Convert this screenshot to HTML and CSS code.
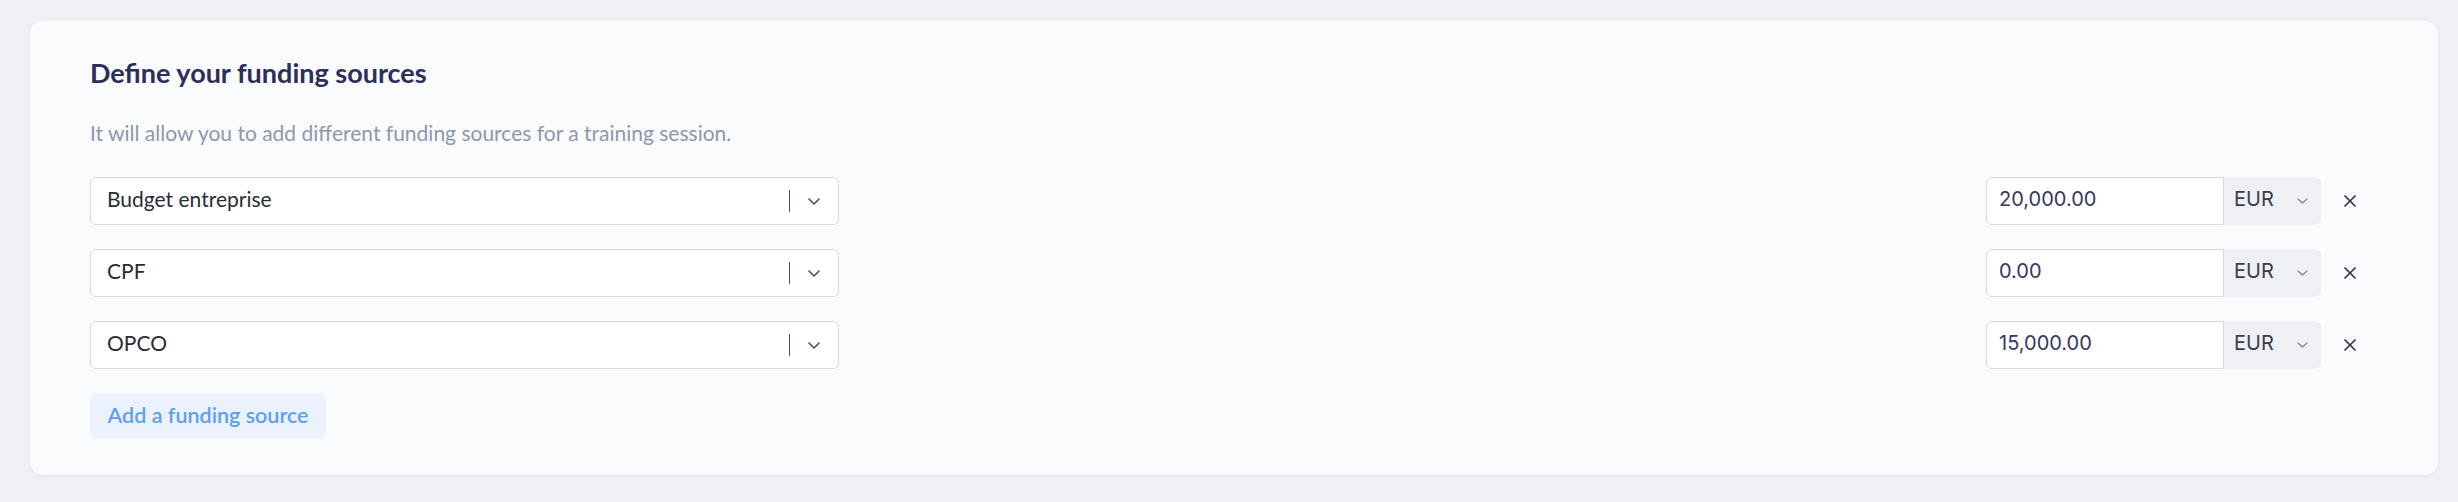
FILE: index.html
```html
<!DOCTYPE html>
<html lang="en">
<head>
<meta charset="utf-8">
<title>Funding sources</title>
<link rel="stylesheet" href="styles.css">
</head>
<body>
<section class="card">
  <h2 class="title">Define your funding sources</h2>
  <p class="subtitle">It will allow you to add different funding sources for a training session.</p>

  <div class="rows">
    <div class="row">
      <div class="select">
        <span class="select-value">Budget entreprise</span>
        <span class="select-sep"></span>
        <svg class="select-chevron" width="12" height="7" viewBox="0 0 12 7"><polyline points="1,1 6,6 11,1" fill="none" stroke="#4b4d70" stroke-width="1.6" stroke-linecap="round" stroke-linejoin="round"/></svg>
      </div>
      <div class="amount">
        <div class="amount-input">20,000.00</div>
        <div class="currency">
          <span>EUR</span>
          <svg class="currency-chevron" width="11" height="6" viewBox="0 0 11 6"><polyline points="1,1 5.5,5 10,1" fill="none" stroke="#7c829c" stroke-width="1.3" stroke-linecap="round" stroke-linejoin="round"/></svg>
        </div>
      </div>
      <button class="remove" type="button" aria-label="Remove">
        <svg width="12" height="12" viewBox="0 0 12 12"><path d="M1 1 L11 11 M11 1 L1 11" stroke="#2e3058" stroke-width="1.7" stroke-linecap="round"/></svg>
      </button>
    </div>

    <div class="row">
      <div class="select">
        <span class="select-value">CPF</span>
        <span class="select-sep"></span>
        <svg class="select-chevron" width="12" height="7" viewBox="0 0 12 7"><polyline points="1,1 6,6 11,1" fill="none" stroke="#4b4d70" stroke-width="1.6" stroke-linecap="round" stroke-linejoin="round"/></svg>
      </div>
      <div class="amount">
        <div class="amount-input">0.00</div>
        <div class="currency">
          <span>EUR</span>
          <svg class="currency-chevron" width="11" height="6" viewBox="0 0 11 6"><polyline points="1,1 5.5,5 10,1" fill="none" stroke="#7c829c" stroke-width="1.3" stroke-linecap="round" stroke-linejoin="round"/></svg>
        </div>
      </div>
      <button class="remove" type="button" aria-label="Remove">
        <svg width="12" height="12" viewBox="0 0 12 12"><path d="M1 1 L11 11 M11 1 L1 11" stroke="#2e3058" stroke-width="1.7" stroke-linecap="round"/></svg>
      </button>
    </div>

    <div class="row">
      <div class="select">
        <span class="select-value">OPCO</span>
        <span class="select-sep"></span>
        <svg class="select-chevron" width="12" height="7" viewBox="0 0 12 7"><polyline points="1,1 6,6 11,1" fill="none" stroke="#4b4d70" stroke-width="1.6" stroke-linecap="round" stroke-linejoin="round"/></svg>
      </div>
      <div class="amount">
        <div class="amount-input">15,000.00</div>
        <div class="currency">
          <span>EUR</span>
          <svg class="currency-chevron" width="11" height="6" viewBox="0 0 11 6"><polyline points="1,1 5.5,5 10,1" fill="none" stroke="#7c829c" stroke-width="1.3" stroke-linecap="round" stroke-linejoin="round"/></svg>
        </div>
      </div>
      <button class="remove" type="button" aria-label="Remove">
        <svg width="12" height="12" viewBox="0 0 12 12"><path d="M1 1 L11 11 M11 1 L1 11" stroke="#2e3058" stroke-width="1.7" stroke-linecap="round"/></svg>
      </button>
    </div>
  </div>

  <button class="add-btn" type="button">Add a funding source</button>
</section>
</body>
</html>
```

FILE: styles.css
```css
* {
  box-sizing: border-box;
}

html, body {
  margin: 0;
  background: #eef0f4;
}

body {
  padding: 21px 20px 26px 30px;
  font-family: Lato, "Noto Sans", sans-serif;
}

.card {
  background: #fafbfd;
  border-radius: 13px;
  box-shadow: 0 1px 3px rgba(30, 40, 80, 0.05);
  padding: 36px 71px 36px 60px;
  display: flex;
  flex-direction: column;
  align-items: flex-start;
}

.title {
  margin: 0;
  font-size: 27px;
  line-height: 32px;
  font-weight: 700;
  color: #2c2e5b;
}

.subtitle {
  margin: 30px 0 30px;
  font-size: 21px;
  line-height: 28px;
  color: #8e98ad;
}

.rows {
  display: flex;
  flex-direction: column;
  gap: 24px;
  align-self: stretch;
}

.row {
  display: flex;
  align-items: center;
}

.select {
  width: 749px;
  height: 48px;
  border: 1px solid #d6d9e3;
  border-radius: 6px;
  background: #ffffff;
  display: flex;
  align-items: center;
  padding: 0 18px 0 16px;
}

.select-value {
  flex: 1;
  font-size: 21px;
  line-height: 42px;
  padding-bottom: 4px;
  color: #2b2c36;
}

.select-sep {
  width: 1.5px;
  height: 22px;
  background: #4b4a6e;
  margin-right: 18px;
}

.select-chevron {
  display: block;
}

.amount {
  margin-left: auto;
  display: flex;
  height: 48px;
}

.amount-input {
  width: 238px;
  height: 48px;
  border: 1px solid #d6d9e3;
  border-radius: 6px 0 0 6px;
  background: #ffffff;
  padding: 0 12px 4px 12px;
  font-family: Inter, "Noto Sans", sans-serif;
  font-size: 20px;
  line-height: 42px;
  color: #353760;
}

.currency {
  width: 97px;
  height: 48px;
  background: #eff0f4;
  border-radius: 0 6px 6px 0;
  display: flex;
  align-items: center;
  justify-content: space-between;
  padding: 0 13px 0 10px;
  font-family: Inter, "Noto Sans", sans-serif;
  font-size: 20px;
  color: #3b3c4a;
}

.currency span {
  line-height: 42px;
  padding-bottom: 4px;
}

.currency-chevron {
  display: block;
}

.remove {
  width: 34px;
  height: 34px;
  margin-left: 12px;
  border: 0;
  padding: 0;
  background: transparent;
  display: flex;
  align-items: center;
  justify-content: center;
  cursor: pointer;
}

.add-btn {
  margin-top: 24px;
  width: 236px;
  height: 46px;
  padding: 0 0 2px;
  border: 0;
  border-radius: 7px;
  background: #ebf2fd;
  color: #5e9ff2;
  font-family: Lato, "Noto Sans", sans-serif;
  font-size: 21.5px;
  font-weight: 600;
  cursor: pointer;
}
```
